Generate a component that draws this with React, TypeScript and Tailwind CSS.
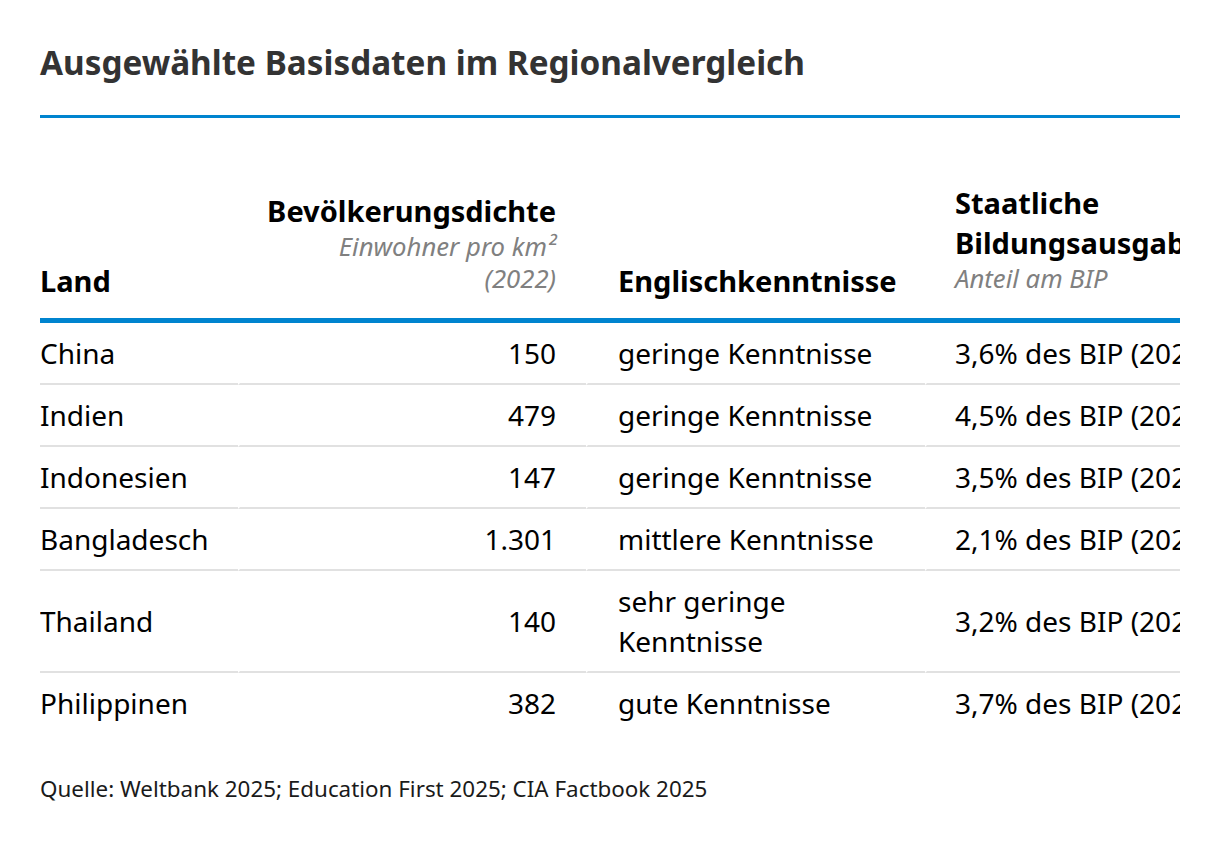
const rows = [
  { land: "China", dichte: "150", englisch: "geringe Kenntnisse", bildung: "3,6% des BIP (2022)" },
  { land: "Indien", dichte: "479", englisch: "geringe Kenntnisse", bildung: "4,5% des BIP (2022)" },
  { land: "Indonesien", dichte: "147", englisch: "geringe Kenntnisse", bildung: "3,5% des BIP (2022)" },
  { land: "Bangladesch", dichte: "1.301", englisch: "mittlere Kenntnisse", bildung: "2,1% des BIP (2022)" },
  { land: "Thailand", dichte: "140", englisch: "sehr geringe Kenntnisse", bildung: "3,2% des BIP (2022)" },
  { land: "Philippinen", dichte: "382", englisch: "gute Kenntnisse", bildung: "3,7% des BIP (2022)" },
]

export default function App() {
  return (
    <div className="min-h-[846px] bg-white px-[40px] pt-[40px] text-black [font-family:'Noto_Sans',sans-serif]">
      <h1 className="text-[33.3px] leading-[44px] font-bold text-[#333333]">
        Ausgewählte Basisdaten im Regionalvergleich
      </h1>
      <div className="mt-[31px] h-[3px] bg-[#0084cf]" />

      {/* table is wider than the frame and gets clipped on the right, as in the article */}
      <div className="mt-[65px] w-[1140px] overflow-hidden">
        <table className="w-[1215px] table-fixed border-separate border-spacing-0">
          <colgroup>
            <col className="w-[198px]" />
            <col className="w-[348px]" />
            <col className="w-[339px]" />
            <col className="w-[330px]" />
          </colgroup>
          <thead>
            <tr className="align-bottom">
              <th className="border-b-[5px] border-[#0084cf] pb-[17px] text-left text-[29px] leading-[40px] font-bold">
                Land
              </th>
              <th className="border-b-[5px] border-[#0084cf] pr-[30px] pb-[17px] text-right font-normal">
                <div className="text-[29px] leading-[40px] font-bold">Bevölkerungsdichte</div>
                <div className="mb-[6px] text-[25.7px] leading-[32px] italic text-[#808080]">
                  Einwohner pro km²
                  <br />
                  (2022)
                </div>
              </th>
              <th className="border-b-[5px] border-[#0084cf] pl-[32px] pb-[17px] text-left text-[29px] leading-[40px] font-bold">
                Englischkenntnisse
              </th>
              <th className="border-b-[5px] border-[#0084cf] pl-[30px] pb-[17px] text-left font-normal">
                <div className="text-[29px] leading-[40px] font-bold whitespace-nowrap">
                  Staatliche
                  <br />
                  Bildungsausgaben
                </div>
                <div className="mb-[6px] text-[25.7px] leading-[32px] italic text-[#808080]">Anteil am BIP</div>
              </th>
            </tr>
          </thead>
          <tbody className="text-[28px] leading-[40px]">
            {rows.map((r, i) => {
              const last = i === rows.length - 1
              const line = last ? "" : "border-b-2 border-b-[#e1e1e1]"
              return (
                <tr key={r.land} className="align-middle">
                  <td className={`${line} py-[10px] text-left`}>{r.land}</td>
                  <td className={`${line} border-l-2 border-l-white py-[10px] pr-[30px] text-right`}>{r.dichte}</td>
                  <td className={`${line} border-l-2 border-l-white py-[10px] pl-[30px] pr-[16px] text-left`}>
                    {r.englisch === "sehr geringe Kenntnisse" ? (
                      <>
                        sehr geringe
                        <br />
                        Kenntnisse
                      </>
                    ) : (
                      r.englisch
                    )}
                  </td>
                  <td className={`${line} border-l-2 border-l-white py-[10px] pl-[28px] text-left whitespace-nowrap`}>
                    {r.bildung}
                  </td>
                </tr>
              )
            })}
          </tbody>
        </table>
      </div>

      <p className="mt-[40px] text-[22.4px] leading-[32px] text-[#1a1a1a]">
        Quelle: Weltbank 2025; Education First 2025; CIA Factbook 2025
      </p>
    </div>
  )
}
